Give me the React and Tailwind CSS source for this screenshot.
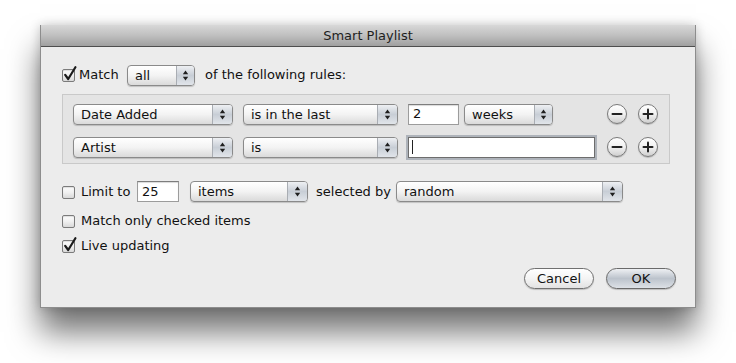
import React from 'react'

function Arrows() {
  return (
    <svg width="7" height="11" viewBox="0 0 7 11">
      <path d="M3.5 0.5 L6.2 4.3 L0.8 4.3 Z" fill="#1f1f1f" />
      <path d="M0.8 6.7 L6.2 6.7 L3.5 10.5 Z" fill="#1f1f1f" />
    </svg>
  )
}

function Checkbox({ checked }) {
  return (
    <div className="relative h-[14px] w-[14px] shrink-0">
      <div className="absolute left-0 top-[1px] h-[13px] w-[13px] rounded-[2px] border border-[#7b7b7b] bg-gradient-to-b from-[#fdfdfd] via-[#f0f0f0] to-[#d9d9d9] shadow-[inset_0_1px_1px_rgba(0,0,0,0.12)]" />
      {checked && (
        <svg className="absolute -top-[2px] left-[1px]" width="14" height="16" viewBox="0 0 14 16">
          <path d="M2.2 8.8 L5.2 13 L12.4 1.2" fill="none" stroke="#1b1b1b" strokeWidth="2.2" strokeLinecap="round" strokeLinejoin="round" />
        </svg>
      )}
    </div>
  )
}

function Popup({ w, text, seg = 'w-[20px]' }) {
  return (
    <div className={`flex h-[21px] ${w} shrink-0 overflow-hidden rounded-[4px] border border-[#8a8a8a] bg-gradient-to-b from-white via-[#f3f3f3] to-[#dadada] shadow-[0_1px_1px_rgba(0,0,0,0.18)]`}>
      <span className="flex-1 truncate pl-[7px] text-[13px] leading-[19px] text-[#111]">{text}</span>
      <span className={`flex ${seg} items-center justify-center border-l border-[#a9adb3] bg-gradient-to-b from-[#eef0f3] via-[#c8ced6] to-[#e1e5ea]`}>
        <Arrows />
      </span>
    </div>
  )
}

function Field({ w, value }) {
  return (
    <div className={`flex h-[21px] ${w} shrink-0 items-center border border-[#9c9c9c] border-t-[#7d7d7d] bg-white pl-[4px] text-[13px] text-[#111] shadow-[inset_0_1px_1px_rgba(0,0,0,0.15)]`}>
      {value}
    </div>
  )
}

function Circle({ plus }) {
  return (
    <div className="flex h-[20px] w-[20px] shrink-0 items-center justify-center rounded-full border border-[#7a7a7a] bg-gradient-to-b from-white via-[#f1f1f1] to-[#cfcfcf] shadow-[0_1px_1px_rgba(0,0,0,0.2)]">
      <svg width="12" height="12" viewBox="0 0 12 12">
        <path d="M1.5 6 H10.5" stroke="#222" strokeWidth="2" strokeLinecap="round" />
        {plus && <path d="M6 1.5 V10.5" stroke="#222" strokeWidth="2" strokeLinecap="round" />}
      </svg>
    </div>
  )
}

function RuleRow({ field, op, valueSlot }) {
  return (
    <div className="flex h-[22px] items-center">
      <Popup w="w-[160px]" text={field} />
      <div className="ml-[10px]">
        <Popup w="w-[155px]" text={op} />
      </div>
      <div className="ml-[10px] flex items-center">{valueSlot}</div>
      <div className="ml-auto flex items-center gap-[11px]">
        <Circle />
        <Circle plus />
      </div>
    </div>
  )
}

export default function App() {
  return (
    <div className="h-[363px] w-[736px] overflow-hidden bg-white pl-[40px] pt-[25px] font-['DejaVu_Sans',sans-serif] text-[#111]">
      <div className="w-[656px] border-x border-b border-[#8d8d8d] bg-[#ececec] shadow-[0_24px_30px_rgba(0,0,0,0.55),0_0_10px_rgba(0,0,0,0.2)]">
        {/* title bar */}
        <div className="flex h-[22px] items-center justify-center border-b border-[#4e4e4e] bg-gradient-to-b from-[#d8d8d8] via-[#bfbfbf] to-[#a0a0a0] text-[13px] text-[#1e1e1e]">
          Smart Playlist
        </div>

        <div className="pb-[18px] pl-[21px] pr-[25px] pt-[18px] text-[13px]">
          {/* match row */}
          <div className="flex h-[20px] items-center">
            <Checkbox checked />
            <span className="ml-[3px] w-[48px]">Match</span>
            <Popup w="w-[68px]" text="all" seg="w-[18px]" />
            <span className="ml-[10px]">of the following rules:</span>
          </div>

          {/* rules box */}
          <div className="mt-[9px] h-[70px] border border-[#c9c9c9] bg-[#e4e4e4] pb-[6px] pl-[10px] pr-[11px] pt-[8px]">
            <RuleRow
              field="Date Added"
              op="is in the last"
              valueSlot={
                <>
                  <Field w="w-[51px]" value="2" />
                  <div className="ml-[5px]">
                    <Popup w="w-[89px]" text="weeks" seg="w-[18px]" />
                  </div>
                </>
              }
            />
            <div className="mt-[11px]">
              <RuleRow
                field="Artist"
                op="is"
                valueSlot={
                  <div className="flex h-[21px] w-[187px] items-center border border-[#6d6d6d] bg-white pl-[3px] shadow-[0_0_0_2px_#aeb3ba]">
                    <span className="h-[14px] w-[1px] bg-[#222]" />
                  </div>
                }
              />
            </div>
          </div>

          {/* limit row */}
          <div className="mt-[17px] flex h-[21px] items-center">
            <Checkbox />
            <span className="ml-[5px] w-[56px]">Limit to</span>
            <Field w="w-[42px]" value="25" />
            <div className="ml-[11px]">
              <Popup w="w-[118px]" text="items" />
            </div>
            <span className="ml-[8px] w-[80px]">selected by</span>
            <Popup w="w-[227px]" text="random" />
          </div>

          <div className="mt-[10px] flex h-[18px] items-center">
            <Checkbox />
            <span className="ml-[5px]">Match only checked items</span>
          </div>

          <div className="mt-[7px] flex h-[18px] items-center">
            <Checkbox checked />
            <span className="ml-[5px]">Live updating</span>
          </div>

          {/* buttons */}
          <div className="-mr-[6px] mt-[13px] flex justify-end gap-[12px]">
            <button className="flex h-[21px] w-[70px] items-center justify-center rounded-full border border-[#707070] bg-gradient-to-b from-white via-[#f4f4f4] to-[#e2e2e2] text-[13px] text-[#111] shadow-[0_1px_1px_rgba(0,0,0,0.2)]">
              Cancel
            </button>
            <button className="flex h-[21px] w-[70px] items-center justify-center rounded-full border border-[#6a6a6a] bg-gradient-to-b from-[#eef0f3] via-[#bcc3cc] to-[#dde1e6] text-[13px] text-[#111] shadow-[0_1px_1px_rgba(0,0,0,0.2)]">
              OK
            </button>
          </div>
        </div>
      </div>
    </div>
  )
}
